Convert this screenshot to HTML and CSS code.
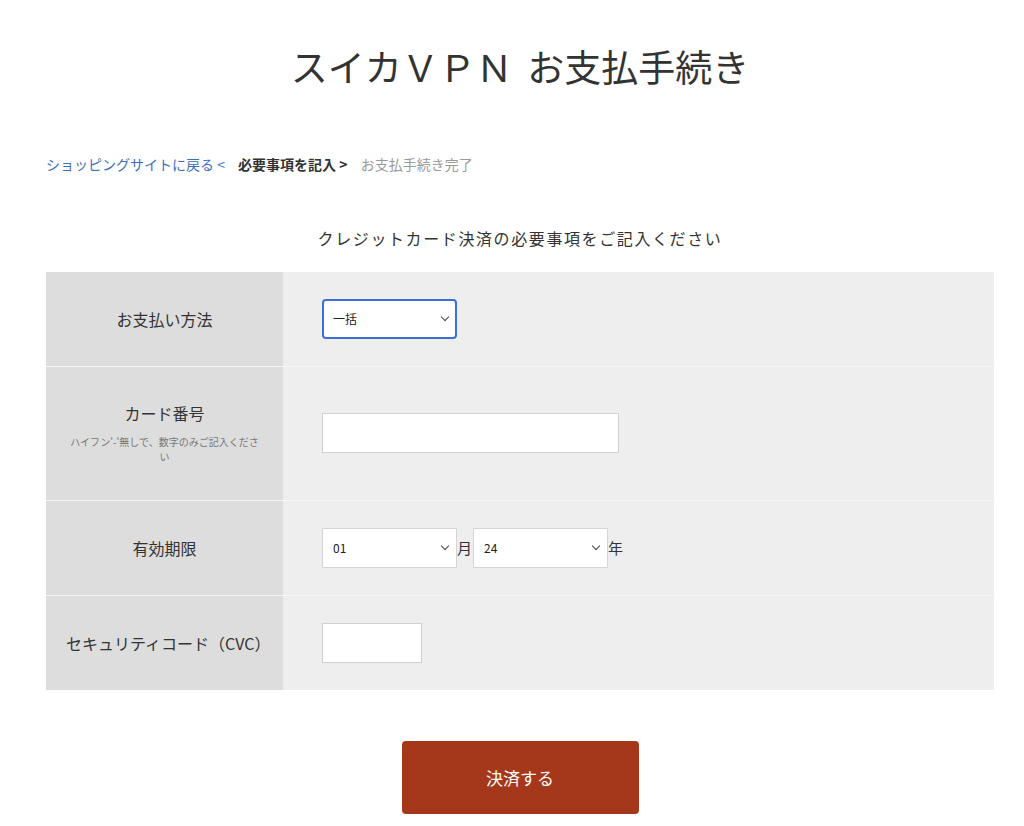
FILE: index.html
```html
<!DOCTYPE html>
<html lang="ja">
<head>
    <meta charset="UTF-8">
    <meta name="viewport" content="width=device-width, initial-scale=1.0">
    <title>スイカＶＰＮ お支払手続き</title>
    <link rel="stylesheet" href="styles.css">
</head>
<body>

    <div id="main">
        <h1 class="title">スイカＶＰＮ お支払手続き</h1>

        <div class="breadcrumb">
            <a href="#" class="crumb-back">ショッピングサイトに戻る &lt;</a>
            <span class="crumb-current">必要事項を記入 &gt;</span>
            <span class="crumb-next">お支払手続き完了</span>
        </div>

        <p class="lead">クレジットカード決済の必要事項をご記入ください</p>

        <form class="pay-form">
            <table class="form-table">
                <tr>
                    <th>お支払い方法</th>
                    <td>
                        <span class="select-wrap">
                            <select class="select focused">
                                <option>一括</option>
                            </select>
                        </span>
                    </td>
                </tr>
                <tr class="tall">
                    <th>
                        カード番号
                        <span class="note">ハイフン'-'無しで、数字のみご記入ください</span>
                    </th>
                    <td><input type="text" class="input card-number"></td>
                </tr>
                <tr>
                    <th>有効期限</th>
                    <td>
                        <span class="select-wrap"><select class="select"><option>01</option></select></span><span class="unit">月</span><span class="select-wrap"><select class="select"><option>24</option></select></span><span class="unit">年</span>
                    </td>
                </tr>
                <tr>
                    <th>セキュリティコード（CVC）</th>
                    <td><input type="text" class="input cvc"></td>
                </tr>
            </table>

            <div class="actions">
                <button type="button" class="submit">決済する</button>
            </div>
        </form>
    </div>

</body>
</html>
```

FILE: styles.css
```css
body {
    margin: 0;
    background: white;
    color: #333;
    font-family: "Noto Sans CJK JP", "Noto Sans", sans-serif;
}
#main {
    padding: 0 30px 0 46px;
}
.title {
    margin: 0;
    padding-top: 40px;
    text-align: center;
    font-size: 37px;
    font-weight: normal;
    line-height: 52px;
    word-spacing: 6px;
    color: #333;
}
.breadcrumb {
    margin-top: 62px;
    font-size: 14px;
    line-height: 20px;
}
.breadcrumb span,
.breadcrumb a {
    margin-right: 10px;
}
.crumb-back {
    color: #3c6fbe;
    text-decoration: none;
}
.crumb-current {
    font-weight: bold;
    color: #333;
}
.crumb-next {
    color: #999;
}
.lead {
    margin: 52px 0 0;
    text-align: center;
    font-size: 16px;
    letter-spacing: 0.1em;
    line-height: 24px;
}
.pay-form {
    margin-top: 22px;
}
.form-table {
    width: 100%;
    border-collapse: collapse;
}
.form-table th,
.form-table td {
    height: 95px;
    box-sizing: border-box;
    border-top: 1px solid #f5f5f5;
    vertical-align: middle;
}
.form-table tr:first-child th,
.form-table tr:first-child td {
    height: 94px;
    border-top: none;
}
.form-table tr.tall th,
.form-table tr.tall td {
    height: 134px;
}
.form-table th {
    width: 237px;
    padding: 0 20px;
    background: #dddddd;
    font-size: 16px;
    font-weight: normal;
    text-align: center;
    line-height: 22px;
}
.form-table td {
    padding: 0 39px;
    background: #eeeeee;
    font-size: 15px;
}
.note {
    display: block;
    margin-top: 10px;
    padding: 0 3px;
    font-size: 10px;
    line-height: 15px;
    color: #777;
}
.select-wrap {
    position: relative;
    display: inline-block;
    vertical-align: middle;
}
.select-wrap::after {
    content: '';
    position: absolute;
    top: 15px;
    right: 9px;
    width: 5px;
    height: 5px;
    border-right: 1.3px solid #444;
    border-bottom: 1.3px solid #444;
    transform: rotate(45deg);
    pointer-events: none;
}
.select {
    -webkit-appearance: none;
    appearance: none;
    width: 135px;
    height: 40px;
    box-sizing: border-box;
    padding: 0 10px;
    border: 1px solid #d4d4d4;
    border-radius: 1px;
    background: white;
    font-family: inherit;
    font-size: 12px;
    color: #222;
    outline: none;
}
.select.focused {
    border: 2px solid #3b6fd6;
    border-radius: 4px;
    padding: 0 9px;
}
.unit {
    display: inline-block;
    width: 16px;
    vertical-align: middle;
    font-size: 15px;
    color: #333;
}
.input {
    height: 40px;
    box-sizing: border-box;
    border: 1px solid #d0d0d0;
    background: white;
    padding: 0 8px;
    outline: none;
    vertical-align: middle;
}
.card-number {
    width: 297px;
}
.cvc {
    width: 100px;
}
.actions {
    display: flex;
    justify-content: center;
    margin-top: 51px;
    padding-bottom: 20px;
}
.submit {
    width: 237px;
    height: 73px;
    border: none;
    border-radius: 4px;
    background: #a5371a;
    color: white;
    font-family: inherit;
    font-size: 17px;
    cursor: pointer;
}
```
